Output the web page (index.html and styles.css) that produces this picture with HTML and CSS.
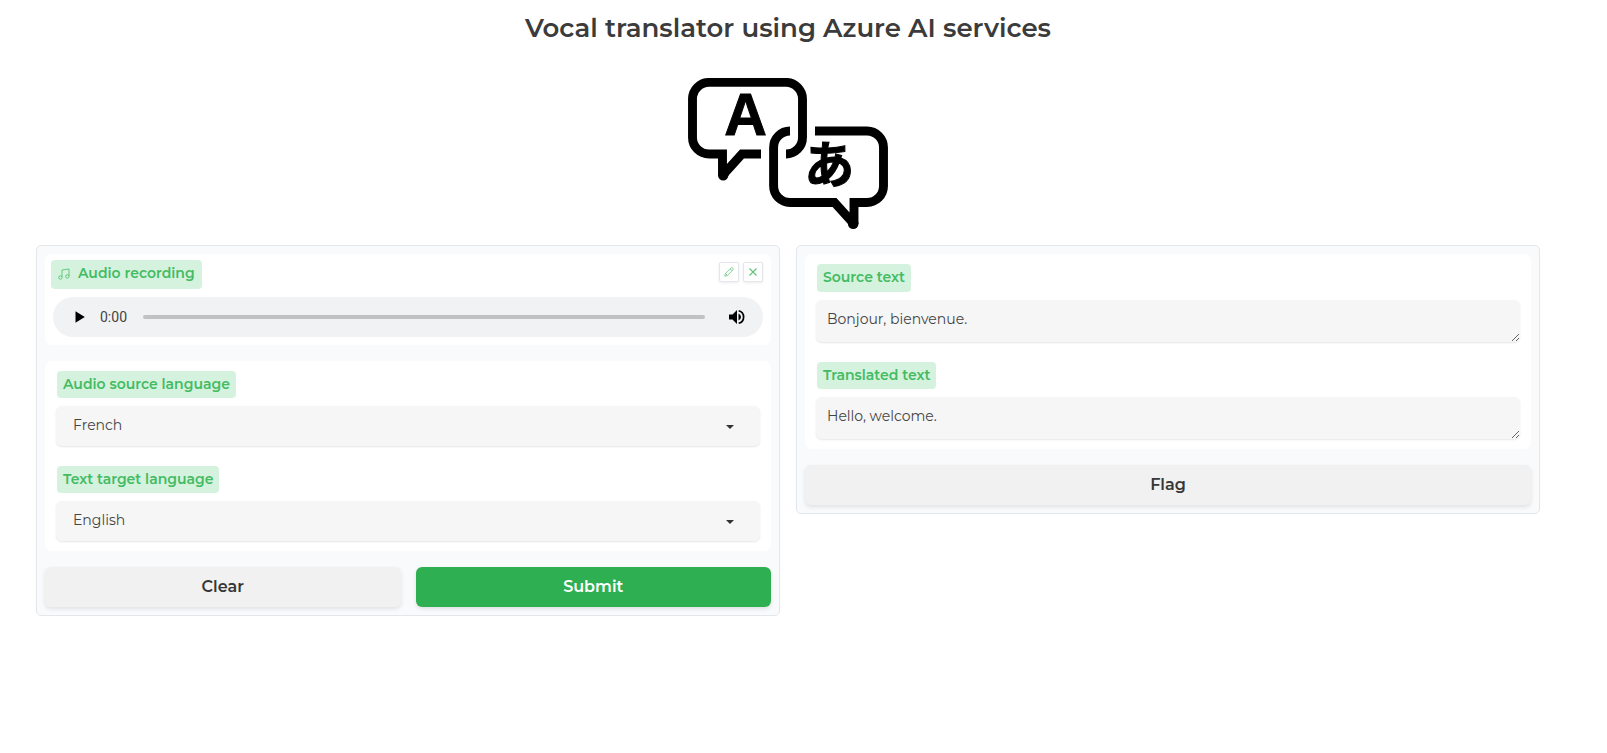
FILE: index.html
```html
<!DOCTYPE html>
<html lang="en">
<head>
<meta charset="utf-8">
<title>Vocal translator using Azure AI services</title>
<link rel="stylesheet" href="styles.css">
</head>
<body>
<main class="app">
  <h1 class="title">Vocal translator using Azure AI services</h1>
  <svg class="logo" viewBox="18 18 200 151" width="200" height="151" role="img" aria-label="Translation">
    <g fill="none" stroke="#000" stroke-width="8.900" stroke-miterlimit="2">
      <path d="M91 94H72L52.500 115.500V94H39A16.500 16.500 0 0 1 22.500 77.500V39A16.500 16.500 0 0 1 39 22.400H116A16.500 16.500 0 0 1 132.500 39V77.500A16.500 16.500 0 0 1 116 94"/>
      <path d="M120 71A16.500 16.500 0 0 0 103.600 87.500V126A16.500 16.500 0 0 0 120 142.500H164.500L184 164V142.500H197A16.500 16.500 0 0 0 213.500 126V87.500A16.500 16.500 0 0 0 197 71H145"/>
    </g>
    <circle cx="53.200" cy="115.200" r="5.200"/>
    <circle cx="183.200" cy="163.700" r="5.300"/>
    <text class="glyph-a" x="75.600" y="74.500">A</text>
    <text class="glyph-ja" x="159.300" y="123.300">あ</text>
  </svg>

  <div class="columns">
    <section class="panel">
      <div class="block audio">
        <div class="audio-head">
          <span class="label audio-label">
            <svg width="12" height="12" viewBox="0 0 24 24" fill="none" stroke="currentColor" stroke-width="1.500"><path d="M8 18V4l14-2v14"/><circle cx="4.800" cy="19" r="3.400"/><circle cx="18.600" cy="17" r="3.400"/></svg>
            <span>Audio recording</span>
          </span>
          <span class="tools">
            <button class="tool" aria-label="Edit"><svg width="10" height="10" viewBox="0 0 20 20" fill="none" stroke="currentColor" stroke-width="1.500"><path d="M1.500 18.500L3 13 14.500 1.800Q16 .800 17.500 2.300T18 5.500L7 17ZM12.500 4L16 7.500M3 13L7 17"/></svg></button>
            <button class="tool" aria-label="Clear"><svg width="10" height="10" viewBox="0 0 10 10" fill="none" stroke="currentColor" stroke-width="1.100"><path d="M1.500 1.500L8.500 8.500M8.500 1.500L1.500 8.500"/></svg></button>
          </span>
        </div>
        <div class="player">
          <svg class="play" width="10" height="12" viewBox="0 0 10 12"><path d="M.500 .200L9.800 6L.500 11.800Z"/></svg>
          <span class="time">0:00</span>
          <span class="track"></span>
          <svg class="volume" width="16" height="16" viewBox="0 0 16 16"><path d="M0 5.500H3.500L8 1V15L3.500 10.500H0Z"/><path d="M9.500 4.500Q12 5.500 12 8T9.500 11.500Z"/><path d="M9.700 1.700A6.500 6.500 0 0 1 9.700 14.300" fill="none" stroke="#000" stroke-width="1.700"/></svg>
        </div>
      </div>
      <div class="block form">
        <div class="field">
          <span class="label">Audio source language</span>
          <div class="select"><span>French</span><svg width="8" height="4" viewBox="0 0 8 4"><path d="M0 0H8L4 4Z"/></svg></div>
        </div>
        <div class="field">
          <span class="label">Text target language</span>
          <div class="select"><span>English</span><svg width="8" height="4" viewBox="0 0 8 4"><path d="M0 0H8L4 4Z"/></svg></div>
        </div>
      </div>
      <div class="actions">
        <button class="btn">Clear</button>
        <button class="btn primary">Submit</button>
      </div>
    </section>

    <section class="panel">
      <div class="block output">
        <div class="field">
          <span class="label tall">Source text</span>
          <textarea class="box" spellcheck="false">Bonjour, bienvenue.</textarea>
        </div>
        <div class="field">
          <span class="label">Translated text</span>
          <textarea class="box" spellcheck="false">Hello, welcome.</textarea>
        </div>
      </div>
      <div class="actions">
        <button class="btn">Flag</button>
      </div>
    </section>
  </div>
</main>
</body>
</html>
```
FILE: styles.css
```css
* { box-sizing: border-box; }
body {
  margin: 0;
  background: #fff;
  color: #3b3b3b;
  font-family: Montserrat, Inter, "Open Sans", sans-serif;
}
.app {
  display: flex;
  flex-direction: column;
  align-items: center;
  width: 1504px;
  margin-left: 36px;
}
.title {
  margin: 10px 0 32px;
  height: 36px;
  font-size: 26px;
  line-height: 36px;
  font-weight: 600;
  white-space: nowrap;
}
.logo { display: block; margin-bottom: 16px; }
.glyph-a {
  font: bold 59px "Liberation Sans", sans-serif;
  text-anchor: middle;
  stroke: #000;
  stroke-width: 1px;
}
.glyph-ja {
  font: bold 50px "Noto Sans CJK JP", sans-serif;
  text-anchor: middle;
  stroke: #000;
  stroke-width: 1px;
}
.columns {
  display: grid;
  grid-template-columns: 744px 744px;
  gap: 16px;
  align-items: start;
}
.panel {
  display: flex;
  flex-direction: column;
  gap: 16px;
  padding: 8px;
  border: 1px solid #e3e6ea;
  border-radius: 5px;
  background: #f9fafc;
}
.block { background: #fff; border-radius: 7px; }
.label {
  display: inline-flex;
  align-items: center;
  align-self: flex-start;
  height: 27px;
  margin-left: 1px;
  padding: 0 6px 2px;
  border-radius: 4px;
  background: #d5f2de;
  color: #43bb62;
  font-size: 14px;
  font-weight: 600;
  white-space: nowrap;
}
.label.tall { height: 28px; }
.audio { height: 91px; padding: 6px 8px 8px; }
.audio-head {
  display: flex;
  justify-content: space-between;
  height: 37px;
}
.audio-label { height: 29px; margin-left: -2px; padding: 0 7px 3px; gap: 8px; width: 151px; }
.audio-label svg { flex: none; margin-top: 2px; }
.tools { display: flex; gap: 4px; padding-top: 2px; }
.tool {
  display: flex;
  align-items: center;
  justify-content: center;
  width: 20px;
  height: 20px;
  padding: 0;
  border: 1px solid #e3e6ea;
  border-radius: 2px;
  background: #fff;
  color: #5fc47a;
  box-shadow: 0 1px 3px rgba(0, 0, 0, .08);
}
.player {
  display: flex;
  align-items: center;
  height: 40px;
  padding: 0 18px 0 22px;
  border-radius: 20px;
  background: #f1f2f4;
}
.time { margin: -1px 0 0 15px; width: 28px; font: 14px Roboto, sans-serif; color: #444; }
.track { flex: 1; height: 4px; margin: 0 24px 0 15px; border-radius: 2px; background: #bfc1c3; }
.form, .output { display: flex; flex-direction: column; padding: 10px 11px; gap: 20px; }
.form { height: 190px; }
.output { height: 195px; }
.field { display: flex; flex-direction: column; gap: 8px; }
.select {
  display: flex;
  align-items: center;
  justify-content: space-between;
  height: 40px;
  padding: 0 26px 2px 17px;
  border-radius: 6px;
  background: #f6f6f6;
  color: #444;
  font-size: 14px;
  font-weight: 400;
  box-shadow: 0 1px 2px rgba(0, 0, 0, .1);
}
.select svg { margin-top: 4px; fill: #333; }
.box {
  display: block;
  width: 704px;
  height: 42px;
  padding: 9px 11px;
  border: 0;
  border-radius: 6px;
  background: #f6f6f6;
  color: #444;
  font: 400 14px/20px Montserrat, Inter, sans-serif;
  overflow: hidden;
  box-shadow: 0 1px 2px rgba(0, 0, 0, .1);
}
.actions { display: flex; gap: 15px; }
.btn {
  flex: 1;
  height: 40px;
  padding: 0 0 2px;
  border: 0;
  border-radius: 6px;
  background: #f1f1f2;
  color: #373737;
  font: 600 16px Montserrat, Inter, sans-serif;
  box-shadow: 0 2px 4px rgba(0, 0, 0, .1);
}
.btn.primary { background: #2eb052; color: #fff; }
```
